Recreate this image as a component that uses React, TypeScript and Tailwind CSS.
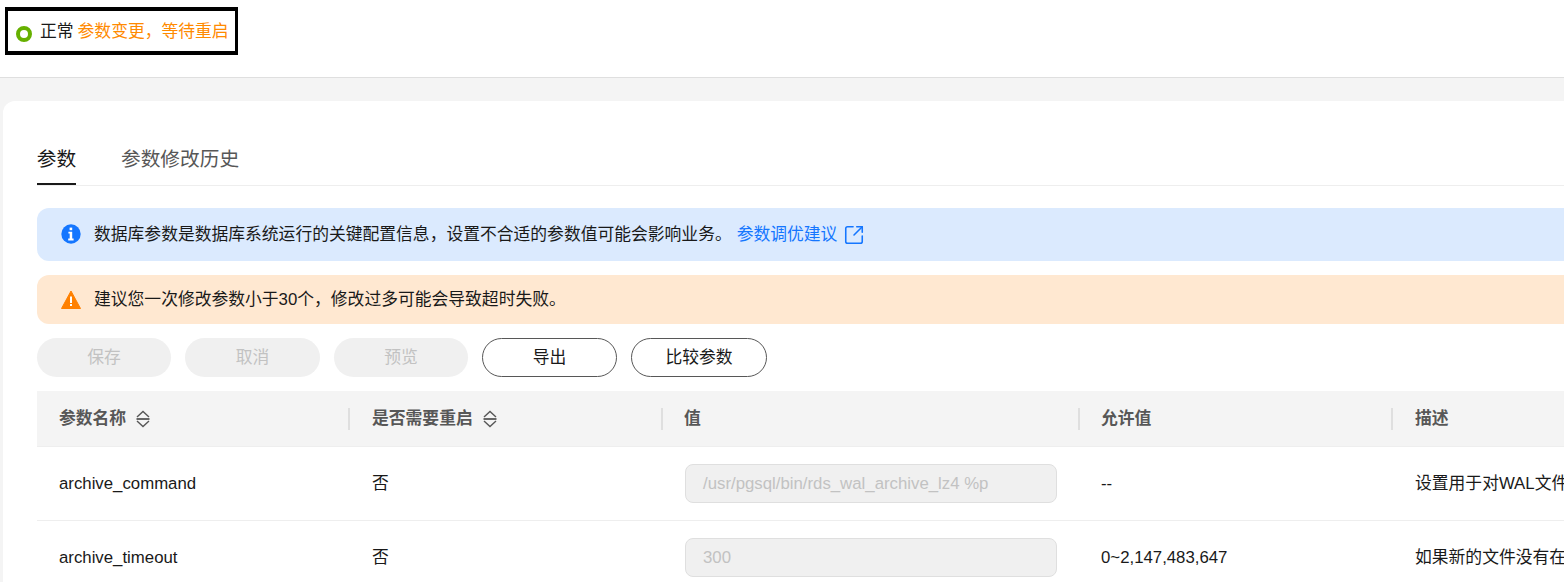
import { SquareArrowOutUpRight } from "lucide-react";

const SortIcon = () => (
  <svg width="16" height="18" viewBox="0 0 16 18" fill="none" stroke="#575757" strokeWidth="1.4" className="ml-[9px]">
    <path d="M2 7 8 1.5 14 7" />
    <path d="M1.5 9h13" strokeWidth="1.8" />
    <path d="M2 11 8 16.5 14 11" />
  </svg>
);

const ActionButton = ({ label, width, disabled }: { label: string; width: string; disabled?: boolean }) => (
  <button
    className={`h-[39px] rounded-full ${width} ${
      disabled ? "bg-[#f0f0f0] text-[#c2c2c2]" : "border border-[#575757] bg-white text-[#191919]"
    }`}
  >
    {label}
  </button>
);

const Row = ({ name, value, range, desc }: { name: string; value: string; range: string; desc: string }) => (
  <div className="flex h-[74px] items-center border-b border-[#eeeeee] text-[#191919]">
    <div className="w-[313px] shrink-0 pl-[22px]">{name}</div>
    <div className="w-[313px] shrink-0 pl-[22px]">否</div>
    <div className="w-[416px] shrink-0 pl-[22px]">
      <div className="flex h-[39px] w-[372px] items-center rounded-[8px] border border-[#dfdfdf] bg-[#f0f0f0] px-[17px] text-[#c2c2c2]">
        {value}
      </div>
    </div>
    <div className="w-[314px] shrink-0 pl-[22px]">{range}</div>
    <div className="flex-1 whitespace-nowrap pl-[22px]">{desc}</div>
  </div>
);

const HeaderCell = ({ label, width, pad, sort, first }: { label: string; width: string; pad: string; sort?: boolean; first?: boolean }) => (
  <div className={`flex h-full shrink-0 items-center ${width}`}>
    {!first && <span className="h-[22px] w-[2px] bg-[#dfdfdf]" />}
    <span className={pad}>{label}</span>
    {sort && <SortIcon />}
  </div>
);

export default function App() {
  return (
    <div
      className="h-[582px] w-[1564px] overflow-hidden bg-[#f4f4f4] text-[16.8px] text-[#191919]"
      style={{ fontFamily: '"Liberation Sans", "Noto Sans CJK SC", sans-serif' }}
    >
      {/* status bar */}
      <div className="h-[78px] border-b border-[#dfdfdf] bg-white pl-[5px] pt-[7px]">
        <div className="flex h-[48px] w-[233px] items-center border-x-[3px] border-y-[4px] border-black pl-[8px]">
          <span className="mt-[6px] h-[16px] w-[16px] rounded-full border-[4px] border-[#66b000] bg-white" />
          <span className="ml-[8px] mt-[1px]">正常</span>
          <span className="ml-[4px] mt-[1px] whitespace-nowrap text-[#ff8a00]">参数变更，等待重启</span>
        </div>
      </div>

      {/* card */}
      <div className="ml-[3px] mt-[23px] h-[500px] w-[1700px] rounded-tl-[12px] bg-white pl-[34px]">
        <div className="flex h-[85px] items-end gap-[45px] border-b border-[#eeeeee] text-[19.7px]">
          <div className="flex h-[44px] w-[39px] justify-center whitespace-nowrap border-b-2 border-[#191919] pt-[4px]">参数</div>
          <div className="flex h-[44px] whitespace-nowrap pt-[4px] text-[#575757]">参数修改历史</div>
        </div>

        <div className="mt-[22px] flex h-[53px] items-center rounded-[12px] bg-[#dbeafe] pl-[25px]">
          <svg width="20" height="20" viewBox="0 0 20 20" className="-ml-px -mt-px">
            <circle cx="10" cy="10" r="9.7" fill="#1476ff" />
            <rect x="8.6" y="3.6" width="2.6" height="2.6" fill="#fff" />
            <path d="M7.4 7.8h3.8v6.8h1.4V16.4H7.2v-1.8h1.5V9.6H7.4z" fill="#fff" />
          </svg>
          <span className="ml-[13px] whitespace-nowrap">数据库参数是数据库系统运行的关键配置信息，设置不合适的参数值可能会影响业务。</span>
          <span className="ml-[5px] whitespace-nowrap text-[#1476ff]">参数调优建议</span>
          <SquareArrowOutUpRight size={22} strokeWidth={1.7} className="ml-[6px] text-[#1476ff]" />
        </div>

        <div className="mt-[14px] flex h-[49px] items-center rounded-[12px] bg-[#ffe8d1] pl-[25px]">
          <svg width="20" height="19" viewBox="0 0 20 19" className="-ml-px">
            <path d="M10 1 19.5 18.5H.5z" fill="#ff8000" stroke="#ff8000" strokeLinejoin="round" />
            <rect x="9" y="6.5" width="2" height="6.5" fill="#fff" />
            <rect x="9" y="14" width="2" height="2" fill="#fff" />
          </svg>
          <span className="ml-[13px] whitespace-nowrap">建议您一次修改参数小于30个，修改过多可能会导致超时失败。</span>
        </div>

        <div className="mt-[14px] flex gap-[14px]">
          <ActionButton label="保存" width="w-[134px]" disabled />
          <ActionButton label="取消" width="w-[135px]" disabled />
          <ActionButton label="预览" width="w-[134px]" disabled />
          <ActionButton label="导出" width="w-[135px]" />
          <ActionButton label="比较参数" width="w-[136px]" />
        </div>

        {/* table */}
        <div className="mt-[14px]">
          <div className="flex h-[56px] items-center border-b border-[#eeeeee] bg-[#f4f4f4] font-bold text-[#575757]">
            <HeaderCell label="参数名称" width="w-[311px]" pad="pl-[22px]" sort first />
            <HeaderCell label="是否需要重启" width="w-[313px]" pad="pl-[22px]" sort />
            <HeaderCell label="值" width="w-[417px]" pad="pl-[21px]" />
            <HeaderCell label="允许值" width="w-[313px]" pad="pl-[21px]" />
            <HeaderCell label="描述" width="w-[300px]" pad="pl-[22px]" />
          </div>
          <Row name="archive_command" value="/usr/pgsql/bin/rds_wal_archive_lz4 %p" range="--" desc="设置用于对WAL文件进行归档的shell命令" />
          <Row name="archive_timeout" value="300" range="0~2,147,483,647" desc="如果新的文件没有在指定时间内生成，则强制切换" />
        </div>
      </div>
    </div>
  );
}
